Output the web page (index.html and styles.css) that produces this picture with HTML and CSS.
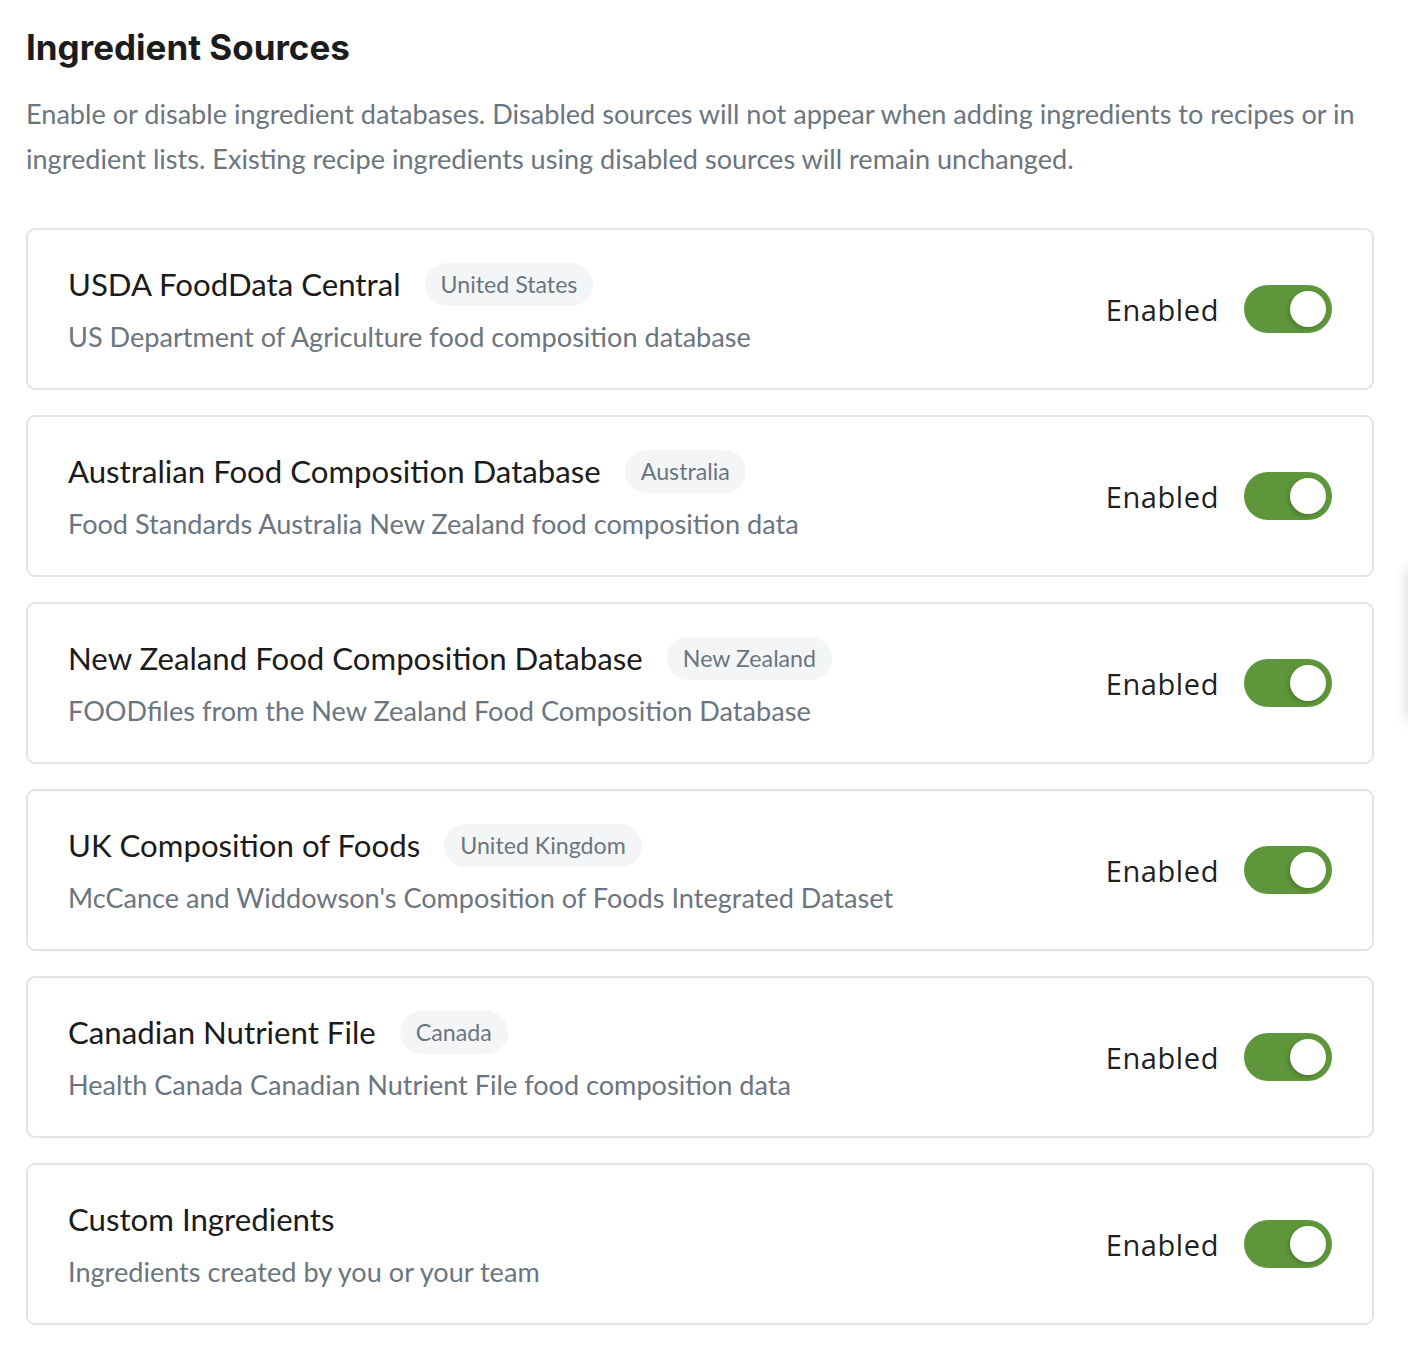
FILE: index.html
```html
<!DOCTYPE html>
<html lang="en">
<head>
    <meta charset="UTF-8">
    <title>Ingredient Sources</title>
    <link rel="stylesheet" href="styles.css">
</head>
<body>
<div class="page">
    <h1 class="title">Ingredient Sources</h1>
    <p class="intro">Enable or disable ingredient databases. Disabled sources will not appear when adding ingredients to recipes or in ingredient lists. Existing recipe ingredients using disabled sources will remain unchanged.</p>

    <ul class="sources">
        <li class="source">
            <div class="info">
                <div class="head">
                    <span class="name">USDA FoodData Central</span>
                    <span class="badge">United States</span>
                </div>
                <div class="desc">US Department of Agriculture food composition database</div>
            </div>
            <div class="state">
                <span class="label">Enabled</span>
                <span class="toggle on"><span class="knob"></span></span>
            </div>
        </li>
        <li class="source">
            <div class="info">
                <div class="head">
                    <span class="name">Australian Food Composition Database</span>
                    <span class="badge">Australia</span>
                </div>
                <div class="desc">Food Standards Australia New Zealand food composition data</div>
            </div>
            <div class="state">
                <span class="label">Enabled</span>
                <span class="toggle on"><span class="knob"></span></span>
            </div>
        </li>
        <li class="source">
            <div class="info">
                <div class="head">
                    <span class="name">New Zealand Food Composition Database</span>
                    <span class="badge">New Zealand</span>
                </div>
                <div class="desc">FOODfiles from the New Zealand Food Composition Database</div>
            </div>
            <div class="state">
                <span class="label">Enabled</span>
                <span class="toggle on"><span class="knob"></span></span>
            </div>
        </li>
        <li class="source">
            <div class="info">
                <div class="head">
                    <span class="name">UK Composition of Foods</span>
                    <span class="badge">United Kingdom</span>
                </div>
                <div class="desc">McCance and Widdowson's Composition of Foods Integrated Dataset</div>
            </div>
            <div class="state">
                <span class="label">Enabled</span>
                <span class="toggle on"><span class="knob"></span></span>
            </div>
        </li>
        <li class="source">
            <div class="info">
                <div class="head">
                    <span class="name">Canadian Nutrient File</span>
                    <span class="badge">Canada</span>
                </div>
                <div class="desc">Health Canada Canadian Nutrient File food composition data</div>
            </div>
            <div class="state">
                <span class="label">Enabled</span>
                <span class="toggle on"><span class="knob"></span></span>
            </div>
        </li>
        <li class="source">
            <div class="info">
                <div class="head">
                    <span class="name">Custom Ingredients</span>
                </div>
                <div class="desc">Ingredients created by you or your team</div>
            </div>
            <div class="state">
                <span class="label">Enabled</span>
                <span class="toggle on"><span class="knob"></span></span>
            </div>
        </li>
    </ul>
</div>
<div class="edge-panel"></div>
</body>
</html>
```

FILE: styles.css
```css
*{
    margin: 0;
    padding: 0;
    box-sizing: border-box;
}
html,body{
    background: #fff;
}
body{
    font-family: Lato, "Liberation Sans", sans-serif;
    overflow: hidden;
}
li{
    list-style: none;
}
.page{
    width: 1348px;
    margin-left: 26px;
    padding-top: 24px;
}
.title{
    font-family: Inter, "Liberation Sans", sans-serif;
    font-size: 35px;
    font-weight: 700;
    color: #1c1c1c;
    line-height: 46px;
}
.intro{
    margin-top: 21px;
    font-size: 27.1px;
    line-height: 45px;
    color: #6b7580;
}
.sources{
    margin-top: 47px;
    display: flex;
    flex-direction: column;
    gap: 25px;
}
.source{
    display: flex;
    align-items: center;
    justify-content: space-between;
    border: 2px solid #e1e4e8;
    border-radius: 9px;
    padding: 34px 40px 34px 40px;
    height: 162px;
}
.head{
    display: flex;
    align-items: center;
    gap: 24px;
    height: 44px;
}
.name{
    font-size: 31.2px;
    color: #1b1b1b;
}
.badge{
    display: inline-block;
    height: 43px;
    line-height: 43px;
    padding: 0 16px;
    border-radius: 22px;
    background: #f4f5f7;
    color: #6b7580;
    font-size: 23.2px;
}
.desc{
    margin-top: 12px;
    font-size: 27.1px;
    line-height: 38px;
    color: #6b7580;
}
.state{
    display: flex;
    align-items: center;
    gap: 25px;
}
.label{
    font-family: "Open Sans", "Noto Sans", sans-serif;
    font-size: 29px;
    color: #1f1f1f;
    letter-spacing: 0.6px;
}
.toggle{
    position: relative;
    display: block;
    width: 88px;
    height: 48px;
    border-radius: 24px;
    background: #d4d8dd;
}
.toggle.on{
    background: #5f963b;
}
.knob{
    position: absolute;
    top: 6px;
    left: 6px;
    width: 36px;
    height: 36px;
    border-radius: 50%;
    background: #fff;
    box-shadow: -2px 2px 4px rgba(0,0,0,0.18);
}
.toggle.on .knob{
    left: 46px;
}
.edge-panel{
    position: absolute;
    top: 565px;
    left: 1408px;
    width: 40px;
    height: 160px;
    border-radius: 12px;
    background: #fff;
    box-shadow: 0 0 14px rgba(0,0,0,0.18);
}
```
